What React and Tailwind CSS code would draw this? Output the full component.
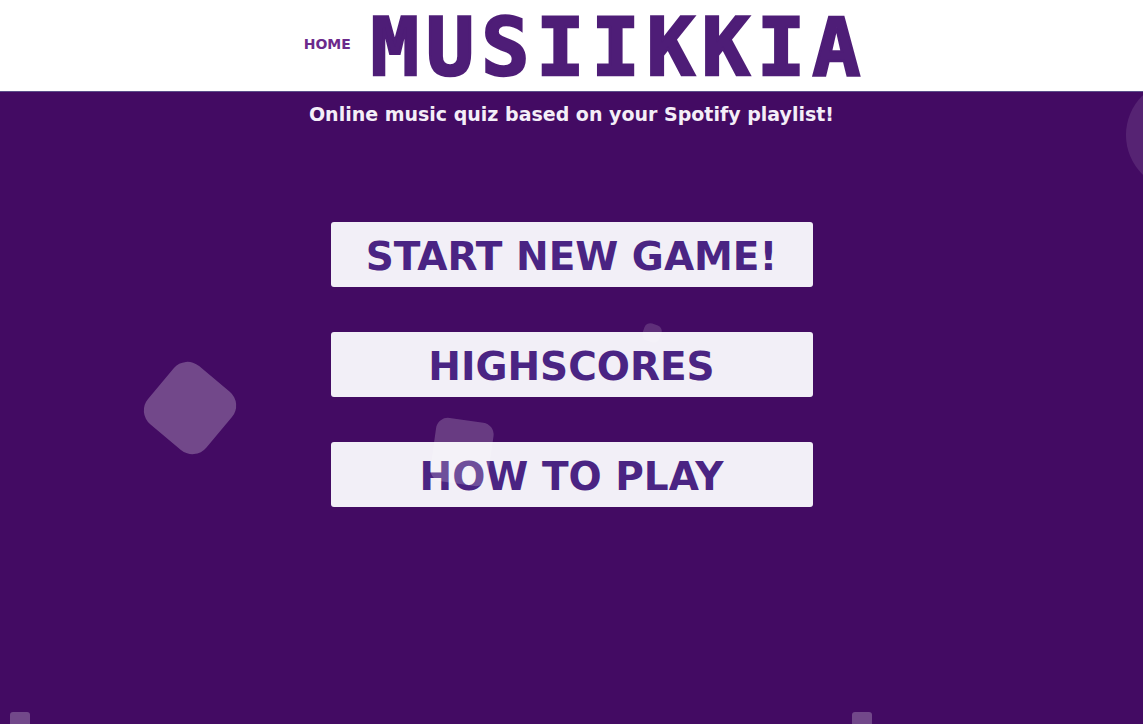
import React from "react";

const MENU = ["START NEW GAME!", "HIGHSCORES", "HOW TO PLAY"];

const Shape = ({ className }) => (
  <div className={"absolute z-20 pointer-events-none bg-white/25 " + className} />
);

export default function App() {
  return (
    <div
      className="relative w-full h-[724px] overflow-hidden bg-[#430b63]"
      style={{ fontFamily: '"DejaVu Sans", Verdana, sans-serif' }}
    >
      <Shape className="left-[152px] top-[370px] w-[76px] h-[76px] rounded-[18px] rotate-[40deg]" />
      <Shape className="left-[433px] top-[420px] w-[58px] h-[64px] rounded-[12px] rotate-[8deg] !bg-white/20" />
      <Shape className="left-[643px] top-[324px] w-[18px] h-[18px] rounded-[6px] rotate-[20deg] !bg-white/15" />
      <Shape className="left-[10px] top-[712px] w-[20px] h-[20px] rounded-[3px]" />
      <Shape className="left-[852px] top-[712px] w-[20px] h-[20px] rounded-[3px]" />
      <Shape className="left-[1126px] top-[80px] w-[110px] h-[110px] rounded-full !bg-white/10 !z-0" />

      <header className="relative z-10 h-[92px] bg-white border-b border-[#5b4f8a] flex items-center justify-center pl-[28px]">
        <a className="text-[14px] font-bold text-[#6c2a8c] mr-[20px] mt-[-2px]">HOME</a>
        <h1
          className="text-[80px] leading-none font-bold text-[#4e1d77] tracking-[7px] mt-[4px] [-webkit-text-stroke:2.5px_#4e1d77]"
          style={{ fontFamily: '"DejaVu Sans Mono", monospace' }}
        >
          MUSIIKKIA
        </h1>
      </header>

      <main className="relative z-10 flex flex-col items-center">
        <p className="mt-[8px] text-[19px] font-bold text-[#f4eef8]">
          Online music quiz based on your Spotify playlist!
        </p>
        <div className="mt-[93px] flex flex-col gap-[45px]">
          {MENU.map((label) => (
            <button
              key={label}
              className="w-[482px] h-[65px] rounded-[3px] bg-[#f2eff7] text-[#4a2483] text-[39px] font-bold flex items-center justify-center pt-[6px]"
            >
              {label}
            </button>
          ))}
        </div>
      </main>
    </div>
  );
}
